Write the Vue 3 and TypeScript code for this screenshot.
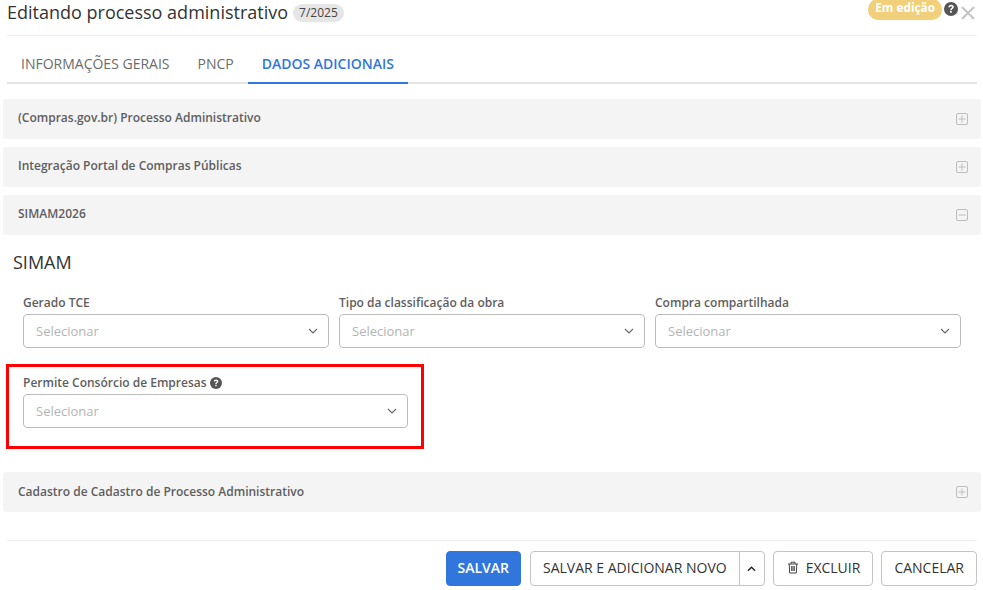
<script setup lang="ts">
const tabs = [
  { label: 'INFORMAÇÕES GERAIS', active: false },
  { label: 'PNCP', active: false },
  { label: 'DADOS ADICIONAIS', active: true },
]
const topFields = ['Gerado TCE', 'Tipo da classificação da obra', 'Compra compartilhada']
</script>

<template>
  <div class="page">
    <header class="head">
      <h1 class="title">Editando processo administrativo</h1>
      <span class="chip">7/2025</span>
      <span class="status">Em edição</span>
      <svg class="help" viewBox="0 0 16 16" width="14" height="14">
        <circle cx="8" cy="8" r="8" fill="#555" />
        <path d="M5 6.1C5.1 4.2 6.4 3.2 8.1 3.2c1.8 0 3.1 1.1 3.1 2.6 0 2.2-2.3 2.1-2.3 3.6H7c0-2.5 2.2-2.4 2.2-3.5 0-.5-.4-.9-1.1-.9-.7 0-1.1.4-1.2 1.1z" fill="#fff" />
        <rect x="7" y="10.3" width="1.9" height="2" fill="#fff" />
      </svg>
      <svg class="close" viewBox="0 0 14 14" width="14" height="14">
        <path d="M1 1l12 12M13 1L1 13" stroke="#c4c4c4" stroke-width="2" fill="none" />
      </svg>
    </header>

    <nav class="tabs">
      <a v-for="t in tabs" :key="t.label" class="tab" :class="{ active: t.active }">{{ t.label }}</a>
    </nav>

    <div class="bar first">
      <span>(Compras.gov.br) Processo Administrativo</span>
      <svg class="toggle" viewBox="0 0 12 12" width="12" height="12">
        <rect x=".5" y=".5" width="11" height="11" rx="1.5" fill="none" stroke="#bdbdbd" />
        <path d="M2.5 6h7M6 2.5v7" stroke="#bdbdbd" />
      </svg>
    </div>
    <div class="bar">
      <span>Integração Portal de Compras Públicas</span>
      <svg class="toggle" viewBox="0 0 12 12" width="12" height="12">
        <rect x=".5" y=".5" width="11" height="11" rx="1.5" fill="none" stroke="#bdbdbd" />
        <path d="M2.5 6h7M6 2.5v7" stroke="#bdbdbd" />
      </svg>
    </div>
    <div class="bar">
      <span>SIMAM2026</span>
      <svg class="toggle" viewBox="0 0 12 12" width="12" height="12">
        <rect x=".5" y=".5" width="11" height="11" rx="1.5" fill="none" stroke="#bdbdbd" />
        <path d="M2.5 6h7" stroke="#bdbdbd" />
      </svg>
    </div>

    <section class="simam">
      <h2 class="section-title">SIMAM</h2>
      <div class="field-row">
        <div v-for="f in topFields" :key="f" class="field">
          <label class="field-label">{{ f }}</label>
          <div class="select">
            <span>Selecionar</span>
            <svg viewBox="0 0 10 6" width="10" height="6">
              <path d="M1 1l4 4 4-4" fill="none" stroke="#666" stroke-width="1.1" />
            </svg>
          </div>
        </div>
      </div>
      <div class="highlight">
        <div class="field">
          <label class="field-label">
            Permite Consórcio de Empresas
            <svg viewBox="0 0 16 16" width="12" height="12">
              <circle cx="8" cy="8" r="8" fill="#555" />
              <path d="M5 6.1C5.1 4.2 6.4 3.2 8.1 3.2c1.8 0 3.1 1.1 3.1 2.6 0 2.2-2.3 2.1-2.3 3.6H7c0-2.5 2.2-2.4 2.2-3.5 0-.5-.4-.9-1.1-.9-.7 0-1.1.4-1.2 1.1z" fill="#fff" />
              <rect x="7" y="10.3" width="1.9" height="2" fill="#fff" />
            </svg>
          </label>
          <div class="select">
            <span>Selecionar</span>
            <svg viewBox="0 0 10 6" width="10" height="6">
              <path d="M1 1l4 4 4-4" fill="none" stroke="#666" stroke-width="1.1" />
            </svg>
          </div>
        </div>
      </div>
    </section>

    <div class="bar last">
      <span>Cadastro de Cadastro de Processo Administrativo</span>
      <svg class="toggle" viewBox="0 0 12 12" width="12" height="12">
        <rect x=".5" y=".5" width="11" height="11" rx="1.5" fill="none" stroke="#bdbdbd" />
        <path d="M2.5 6h7M6 2.5v7" stroke="#bdbdbd" />
      </svg>
    </div>

    <footer class="foot">
      <button class="btn primary">SALVAR</button>
      <div class="split">
        <button class="btn split-main">SALVAR E ADICIONAR NOVO</button>
        <button class="btn split-arrow">
          <svg viewBox="0 0 10 6" width="9" height="6">
            <path d="M1 5l4-4 4 4" fill="none" stroke="#222" stroke-width="1.5" />
          </svg>
        </button>
      </div>
      <button class="btn excluir">
        <svg class="trash" viewBox="0 0 12 13" width="12" height="13">
          <path d="M1 3h10M4 3V1.2h4V3M2.2 3l.5 9h6.6l.5-9M4.7 5v5M6 5v5M7.3 5v5" fill="none" stroke="#444" stroke-width="1" />
        </svg>
        EXCLUIR
      </button>
      <button class="btn">CANCELAR</button>
    </footer>
  </div>
</template>

<style>
body {
  background: #fff;
}
</style>

<style scoped>
.page {
  width: 983px;
  height: 590px;
  overflow: hidden;
  font-family: "Open Sans", "Liberation Sans", sans-serif;
  color: #555;
}
.head {
  display: flex;
  align-items: flex-start;
  height: 35px;
  margin: 0 6px 0 7px;
  border-bottom: 1px solid #efefef;
}
.title {
  margin: 0;
  font-size: 18px;
  font-weight: 400;
  line-height: 24px;
  color: #333;
}
.chip {
  margin: 4px 0 0 5px;
  padding: 0 6px;
  height: 18px;
  line-height: 18px;
  border-radius: 9px;
  background: #e6e6e6;
  font-size: 12px;
  color: #444;
}
.status {
  margin: -1px 0 0 auto;
  padding: 0 7px;
  height: 21px;
  line-height: 17px;
  border-radius: 10px;
  background: #f1cf7b;
  color: #fff;
  font-size: 11.8px;
  font-weight: 700;
}
.help {
  margin: 2px 0 0 2px;
}
.close {
  margin: 6px 2px 0 3px;
}
.tabs {
  display: flex;
  height: 46px;
  margin: 0 6px 0 7px;
  border-bottom: 2px solid #e4e4e4;
}
.tab {
  padding: 0 14px;
  line-height: 55px;
  height: 48px;
  box-sizing: border-box;
  font-size: 14px;
  color: #6b6b6b;
  white-space: nowrap;
}
.tab.active {
  color: #3176dd;
  font-weight: 600;
  border-bottom: 2px solid #3176dd;
}
.bar {
  display: flex;
  align-items: center;
  justify-content: space-between;
  height: 40px;
  margin: 8px 2px 0 3px;
  padding: 0 13px 0 15px;
  border-radius: 3px;
  background: #f4f4f4;
  font-size: 12px;
  font-weight: 600;
  color: #5e5e5e;
}
.bar span {
  margin-bottom: 4px;
}
.bar.last span {
  margin-bottom: 2px;
}
.bar.first {
  margin-top: 15px;
}
.simam {
  height: 229px;
}
.section-title {
  margin: 0;
  padding: 15px 0 0 13px;
  font-size: 18px;
  font-weight: 400;
  line-height: 24px;
  color: #333;
}
.field-row {
  display: grid;
  grid-template-columns: repeat(3, 306px);
  column-gap: 10px;
  padding: 20px 0 0 23px;
}
.field-label {
  display: flex;
  align-items: center;
  gap: 3px;
  height: 17px;
  margin-bottom: 3px;
  font-size: 12px;
  font-weight: 600;
  color: #5e5e5e;
}
.select {
  display: flex;
  align-items: center;
  justify-content: space-between;
  height: 34px;
  box-sizing: border-box;
  padding: 0 10px 0 12px;
  border: 1px solid #bdbdbd;
  border-radius: 4px;
  background: #fff;
  font-size: 13px;
  color: #b4b4b4;
}
.highlight {
  box-sizing: border-box;
  width: 418px;
  height: 85px;
  margin: 16px 0 0 6px;
  padding: 7px 13px 0 14px;
  border: 3px solid #f00;
}
.foot {
  display: flex;
  gap: 8px;
  justify-content: flex-end;
  margin: 28px 6px 0 7px;
  padding-top: 10px;
  border-top: 1px solid #efefef;
}
.btn {
  display: inline-flex;
  align-items: center;
  gap: 7px;
  height: 35px;
  padding: 0 12px 2px;
  border: 1px solid #c4c4c4;
  border-radius: 4px;
  background: #fff;
  font-family: inherit;
  font-size: 14px;
  color: #333;
}
.btn.primary {
  margin-right: 1px;
  padding: 0 11px 2px;
  border-color: #3176dd;
  background: #3176dd;
  color: #fff;
  font-weight: 600;
}
.btn.excluir {
  padding-left: 13px;
}
.split {
  display: flex;
}
.split-main {
  border-radius: 4px 0 0 4px;
}
.split-arrow {
  padding: 0 8px 0 7px;
  margin-left: -1px;
  border-radius: 0 4px 4px 0;
}
</style>
